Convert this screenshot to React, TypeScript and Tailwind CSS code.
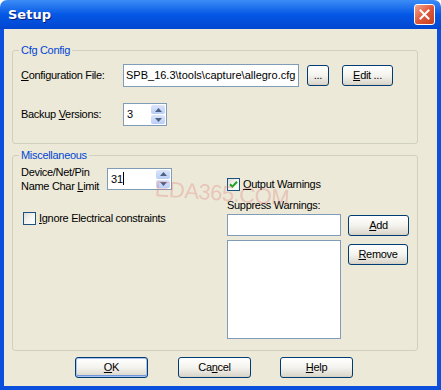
import React from 'react';

const font = { fontFamily: '"Liberation Sans", Arial, sans-serif' };

const Btn: React.FC<{ w: string; children: React.ReactNode; def?: boolean; cls?: string }> = ({ w, children, def, cls }) => (
  <div
    className={`${w} ${cls ?? ''} h-[21px] shrink-0 flex items-center justify-center rounded-[3px] border border-[#003C74] text-[11px] text-black bg-gradient-to-b from-[#FFFFFF] via-[#F4F3EE] to-[#D8D4C8] ${
      def ? 'shadow-[inset_0_0_0_1px_#A9C3EE,inset_0_-1px_0_1px_#6E97DC]' : 'shadow-[inset_0_-1px_0_0_#D6D0C5]'
    }`}
  >
    {children}
  </div>
);

const Spin: React.FC<{ w: string; value: React.ReactNode; h?: string }> = ({ w, value, h }) => (
  <div className={`${w} ${h ?? 'h-[23px]'} shrink-0 flex border border-[#7F9DB9] bg-white`}>
    <div className="flex-1 pl-[3px] pt-[3px] text-[11px] leading-[14px] tracking-normal text-black">{value}</div>
    <div className="w-[15px] flex flex-col gap-[1px] py-[1px] pr-[1px]">
      <div className="flex-1 rounded-[2px] bg-gradient-to-b from-[#DCE6FB] to-[#B9CDF6] flex items-center justify-center">
        <svg width="7" height="4" viewBox="0 0 7 4"><path d="M0 4 L3.5 0 L7 4 Z" fill="#4D6185" /></svg>
      </div>
      <div className="flex-1 rounded-[2px] bg-gradient-to-b from-[#DCE6FB] to-[#B9CDF6] flex items-center justify-center">
        <svg width="7" height="4" viewBox="0 0 7 4"><path d="M0 0 L3.5 4 L7 0 Z" fill="#4D6185" /></svg>
      </div>
    </div>
  </div>
);

const Check: React.FC<{ checked?: boolean }> = ({ checked }) => (
  <div className="w-[13px] h-[13px] shrink-0 border border-[#1C5180] bg-gradient-to-br from-[#DCDCD7] via-[#F4F4F2] to-white flex items-center justify-center">
    {checked && (
      <svg width="9" height="9" viewBox="0 0 9 9">
        <path d="M1 4.2 L3.4 6.6 L8 1.8" stroke="#21A121" strokeWidth="2" fill="none" />
      </svg>
    )}
  </div>
);

const Group: React.FC<{ title: string; h: string; cls?: string; children: React.ReactNode }> = ({ title, h, cls, children }) => (
  <div className={`relative ml-[8px] w-[406px] ${h} ${cls ?? ''} rounded-[3px] border border-[#D0D0BF]`}>
    <span className="absolute top-[-8px] left-[6px] px-[2px] bg-[#ECE9D8] text-[11px] leading-[14px] text-[#0046D5]">{title}</span>
    {children}
  </div>
);

const App: React.FC = () => {
  return (
    <div className="w-[441px] h-[390px] bg-white tracking-[-0.3px]" style={font}>
      <div className="w-[441px] h-[390px] flex flex-col rounded-t-[7px] overflow-hidden">
        <div className="h-[29px] shrink-0 flex items-center justify-between pl-[8px] pr-[6px] bg-gradient-to-b from-[#3B8CF6] via-[#0457E5] to-[#0246D0]">
          <span
            className="text-white text-[13px] font-bold tracking-normal [text-shadow:1px_1px_0_#0A1E7A]"
            style={{ fontFamily: '"DejaVu Sans", Verdana, sans-serif' }}
          >
            Setup
          </span>
          <div className="w-[21px] h-[21px] rounded-[3px] border border-white bg-gradient-to-br from-[#F1A58C] via-[#E0573A] to-[#C3401F] flex items-center justify-center">
            <svg width="11" height="11" viewBox="0 0 11 11">
              <path d="M1.5 1.5 L9.5 9.5 M9.5 1.5 L1.5 9.5" stroke="white" strokeWidth="2" strokeLinecap="square" />
            </svg>
          </div>
        </div>

        <div className="flex-1 flex flex-col bg-[#ECE9D8] border-x-4 border-b-4 border-[#0A50DC] text-[11px] text-black relative">
          <Group title="Cfg Config" h="h-[94px]" cls="mt-[21px]">
            <div className="flex items-center h-[23px] mt-[13px] pl-[8px]">
              <span className="w-[102px] shrink-0"><u>C</u>onfiguration File:</span>
              <div className="w-[176px] h-[23px] shrink-0 border border-[#7F9DB9] bg-white pl-[2px] pt-[3px] text-[11px] leading-[14px] tracking-normal whitespace-nowrap overflow-hidden">
                SPB_16.3\tools\capture\allegro.cfg
              </div>
              <Btn w="w-[22px]" cls="ml-[8px]">...</Btn>
              <Btn w="w-[51px]" cls="ml-[13px]"><span><u>E</u>dit ...</span></Btn>
            </div>
            <div className="flex items-center h-[23px] mt-[16px] pl-[8px]">
              <span className="w-[102px] shrink-0">Backup <u>V</u>ersions:</span>
              <Spin w="w-[44px]" value="3" />
            </div>
          </Group>

          <Group title="Miscellaneous" h="h-[196px]" cls="mt-[11px]">
            <div className="flex">
              <div className="w-[214px] shrink-0 pl-[8px]">
                <div className="flex items-start mt-[9px]">
                  <div className="w-[86px] leading-[14px]">
                    Device/Net/Pin
                    <br />
                    Name Char <u>L</u>imit
                  </div>
                  <div className="mt-[3px]">
                    <Spin w="w-[65px]" h="h-[22px]" value={<span>31<span className="inline-block w-[1px] h-[13px] bg-black align-[-2px]" /></span>} />
                  </div>
                </div>
                <div className="flex items-center mt-[17px] ml-[2px] gap-[3px]">
                  <Check />
                  <span><u>I</u>gnore Electrical constraints</span>
                </div>
              </div>
              <div className="flex flex-col">
                <div className="flex items-center mt-[20px] gap-[3px]">
                  <Check checked />
                  <span><u>O</u>utput Warnings</span>
                </div>
                <div className="mt-[5px] leading-[14px]">Suppress Warnings:</div>
                <div className="flex">
                  <div className="flex flex-col w-[114px] mt-[2px]">
                    <div className="h-[22px] border border-[#7F9DB9] bg-white" />
                    <div className="h-[99px] mt-[4px] border border-[#7F9DB9] bg-white" />
                  </div>
                  <div className="flex flex-col ml-[7px]">
                    <Btn w="w-[61px]" cls="mt-[3px]"><span><u>A</u>dd</span></Btn>
                    <Btn w="w-[60px]" cls="mt-[8px]"><span><u>R</u>emove</span></Btn>
                  </div>
                </div>
              </div>
            </div>
          </Group>

          <div className="flex mt-[6px] pl-[71px]">
            <Btn w="w-[73px]" def><span><u>O</u>K</span></Btn>
            <Btn w="w-[73px]" cls="ml-[30px]"><span>Ca<u>n</u>cel</span></Btn>
            <Btn w="w-[73px]" cls="ml-[29px]"><span><u>H</u>elp</span></Btn>
          </div>

          <div className="absolute left-[151px] top-[143px] rotate-[4deg] origin-left text-[22px] tracking-[-0.5px] text-[#E06A6A]/30 pointer-events-none whitespace-nowrap">
            EDA365.COM
          </div>
        </div>
      </div>
    </div>
  );
};

export default App;
